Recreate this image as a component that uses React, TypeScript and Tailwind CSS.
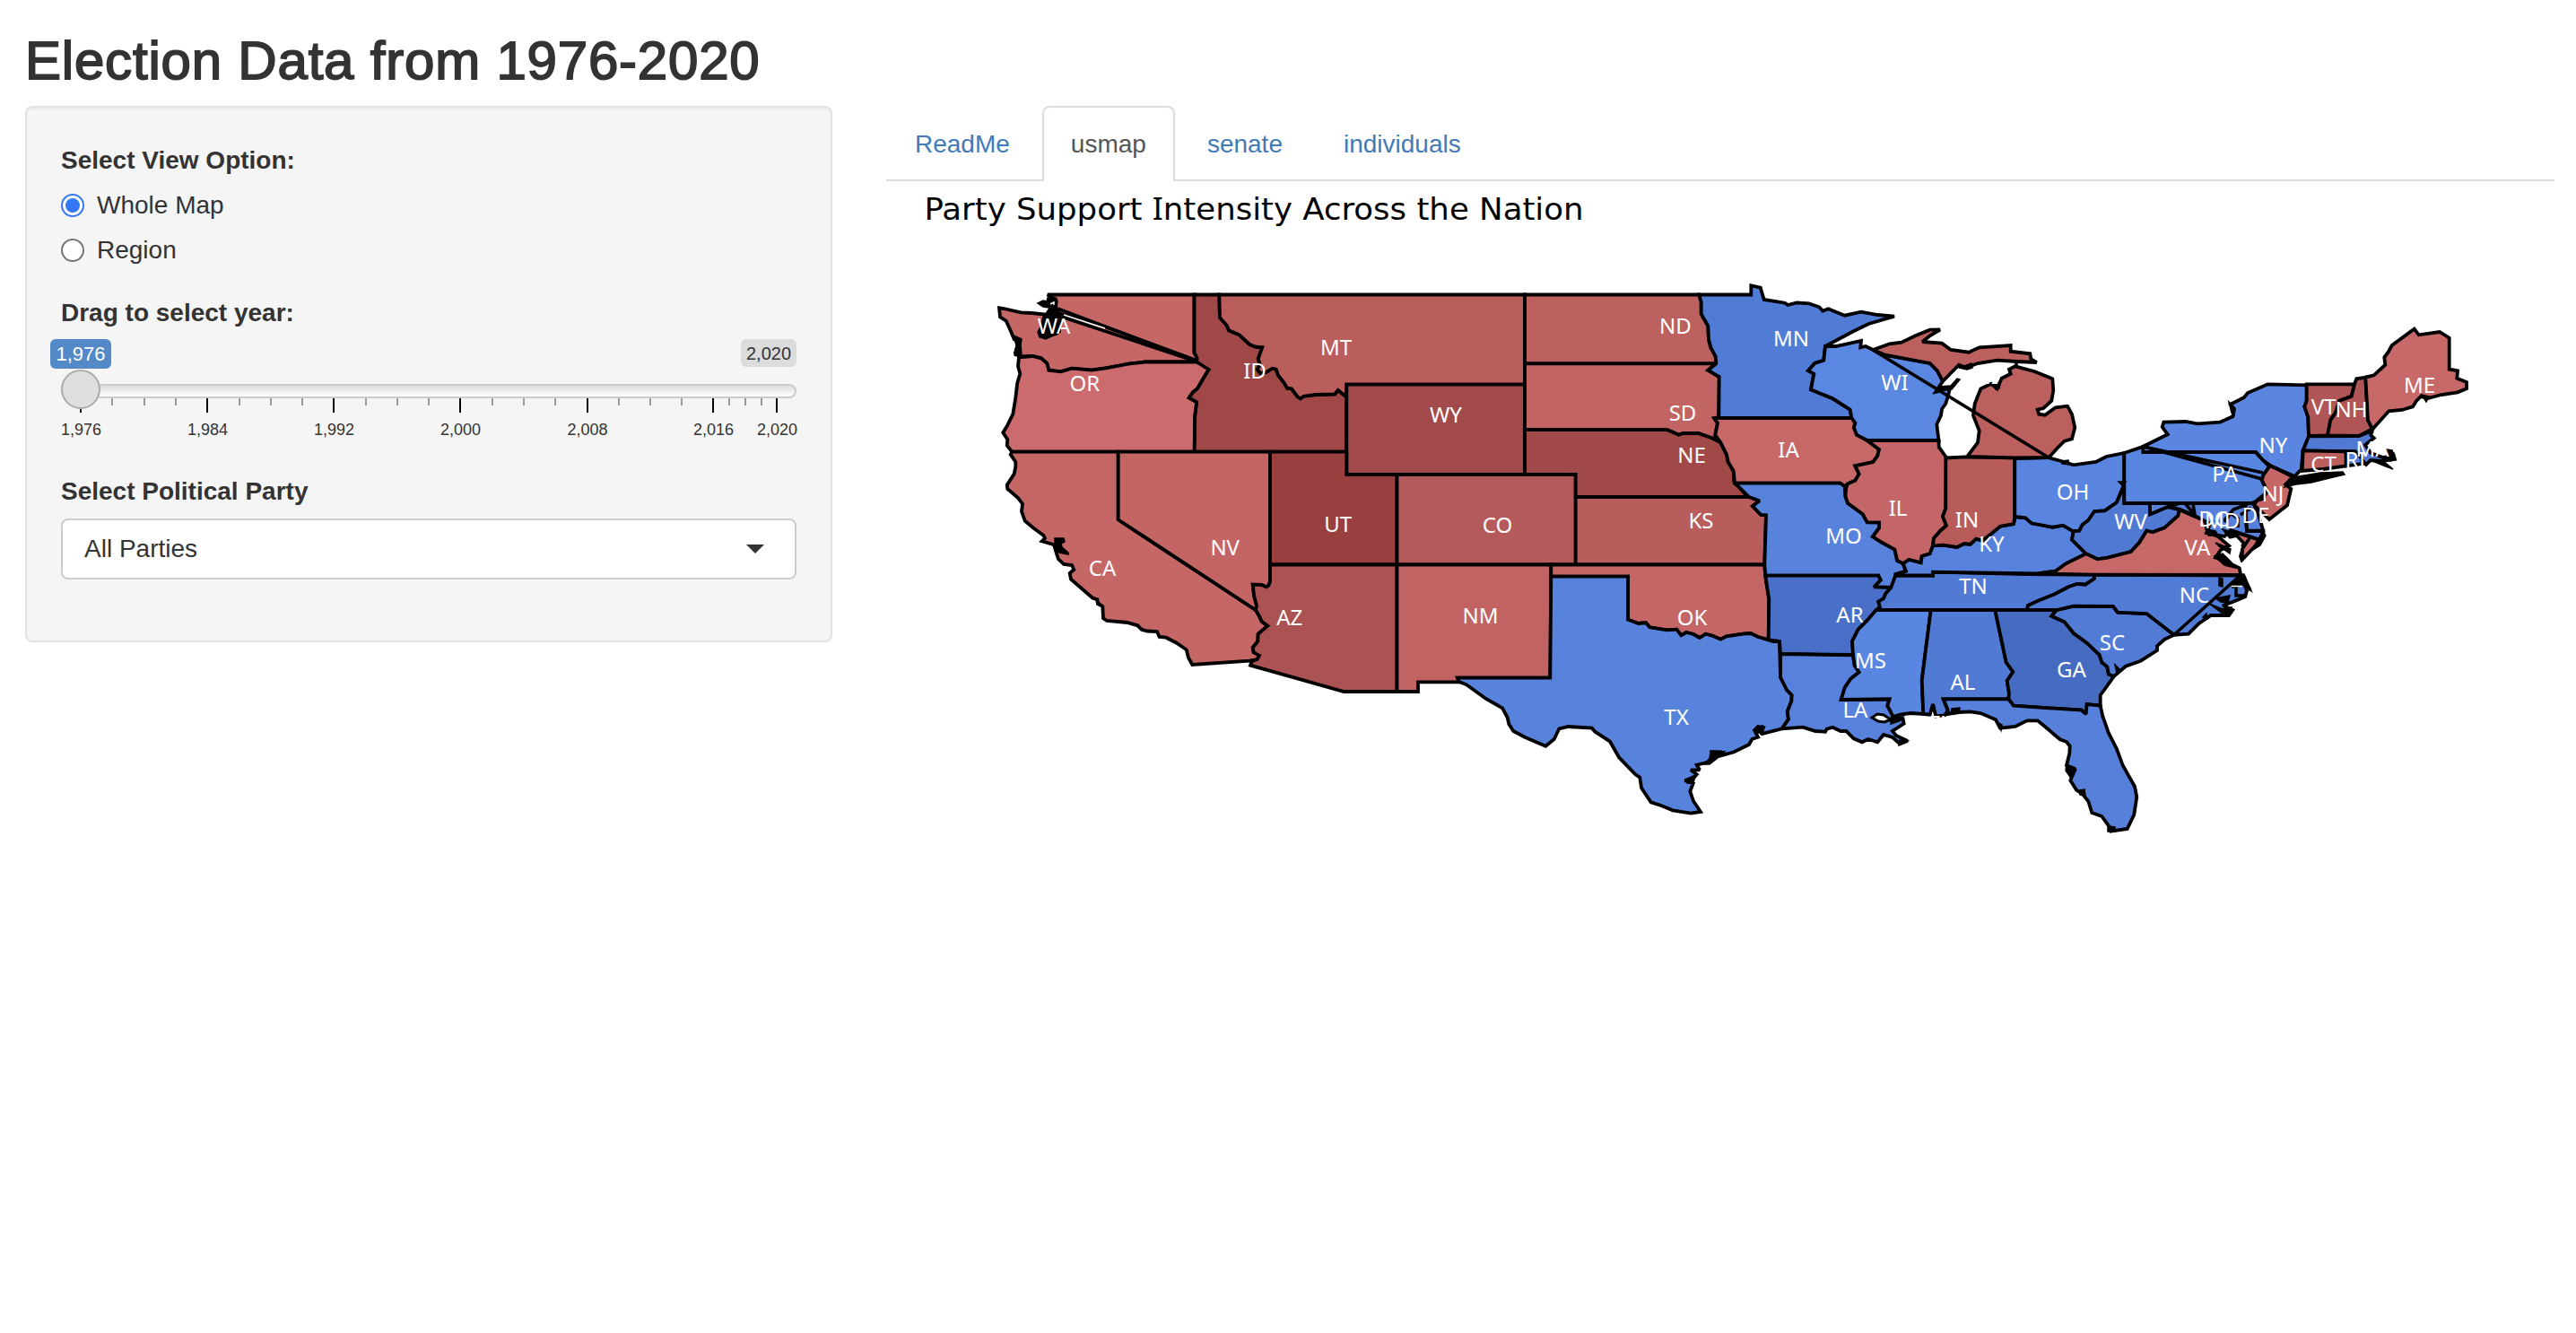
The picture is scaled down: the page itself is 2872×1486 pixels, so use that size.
import React from "react";

type Region = { id: string; fill: string; points: string };
type Label = [string, number, number];

const REGIONS: Region[] = [
  { id: "WA", fill: "#c56767", points: "1168,328.5 1331.5,328.5 1331.5,393 1334.5,399 1334.5,403.5 1313,403.5 1276.7,403.5 1258,405.7 1244,408.5 1233,410.3 1217,412.7 1195,410.7 1182.7,414.3 1169.3,412.7 1167.3,405 1160.7,399.3 1151,397 1139.3,397.3 1132,393 1136.7,379.3 1130.7,378.3 1127.3,370 1121.7,357.7 1115,353.3 1114,343.3 1119.3,344 1138.3,348.3 1150,349 1166.7,350.7 1171,344 1177,340 1177,334 1171,331" },
  { id: "OR", fill: "#cc6b6d", points: "1136,398.3 1151,397 1160.7,399.3 1167.3,405 1169.3,412.7 1182.7,414.3 1195,410.7 1217,412.7 1233,410.3 1258,405.7 1276.7,403.5 1334.5,403.5 1340,406.7 1347.7,412 1341.7,421.7 1335,433.3 1330,437.3 1325.7,443.3 1334.3,448.3 1332.3,463.3 1331.7,503.7 1128.3,503.7 1122.7,496.7 1123.3,490 1118.3,482.3 1122.7,475 1129.3,461.7 1132.3,443.3 1134.3,426.7 1137.3,416.7 1135,408" },
  { id: "ID", fill: "#a04848", points: "1331.5,328.5 1359.3,328.5 1360,354 1367.7,362.7 1370,368.3 1381.7,373.3 1393.3,384 1400,386.7 1407.3,387.3 1402.7,400 1405,406.7 1401.7,411.7 1405,416 1411.7,415 1418.3,410.7 1422.7,411.7 1425,418.3 1431.7,426.7 1435,432.7 1440,433.3 1446.7,442.3 1450,444.3 1453.3,441.7 1466.7,440 1488.3,439.3 1491.7,435 1501,442.3 1501.3,503.7 1331.7,503.7 1332.3,463.3 1334.3,448.3 1325.7,443.3 1330,437.3 1335,433.3 1341.7,421.7 1347.7,412 1334.5,403.5 1334.5,399 1331.5,393" },
  { id: "MT", fill: "#b95d5d", points: "1359.3,328.5 1700,328.5 1700,428.7 1501.3,428.7 1501,442.3 1491.7,435 1488.3,439.3 1466.7,440 1453.3,441.7 1450,444.3 1446.7,442.3 1440,433.3 1435,432.7 1431.7,426.7 1425,418.3 1422.7,411.7 1418.3,410.7 1411.7,415 1405,416 1401.7,411.7 1405,406.7 1402.7,400 1407.3,387.3 1400,386.7 1393.3,384 1381.7,373.3 1370,368.3 1367.7,362.7 1360,354" },
  { id: "WY", fill: "#a24a4a", points: "1501.3,428.7 1700,428.7 1700,529 1501.3,529" },
  { id: "CA", fill: "#c56767", points: "1128.3,503.7 1246.7,503.7 1246.7,579.3 1400,680 1403.3,685.7 1406.7,692.7 1413.3,697.7 1402.7,706.7 1402.3,715 1396.7,721.7 1397.7,727.3 1404,730.7 1401.7,735 1393.3,736.7 1329.3,741 1325,733.3 1322.7,724.3 1311.7,716.7 1300,710.7 1292.7,710 1290,704 1279,703.5 1272.7,701.7 1268.3,697.3 1256.7,694 1234,692 1230,689.3 1229.3,676 1224,672.7 1223.3,668.3 1218.3,666.7 1194,645.7 1192.7,639 1197.3,635 1195,630 1186,629 1180,623.3 1177.3,615 1175,607.3 1161.7,603.3 1165,600 1163.3,596.7 1151.7,588.3 1142.7,580.7 1139,570 1140,561.7 1135,555 1123.3,545 1122.7,540.7 1130.7,528.3 1132.3,520 1132.3,515 1126.7,506.7" },
  { id: "NV", fill: "#c46565", points: "1246.7,503.7 1416,503.7 1416,648.3 1414.5,652.5 1411.7,654.3 1406.7,652 1396.7,651.7 1398.3,665 1401,675 1400,680 1246.7,579.3" },
  { id: "UT", fill: "#993f3f", points: "1416,503.7 1501.3,503.7 1501.3,529 1557.5,529 1557.5,629.5 1416,629.5" },
  { id: "AZ", fill: "#ab5252", points: "1416,629.5 1557.5,629.5 1557.5,771 1498.3,771 1394,741.7 1395.7,737.3 1401.7,735 1404,730.7 1397.7,727.3 1396.7,721.7 1402.3,715 1402.7,706.7 1413.3,697.7 1406.7,692.7 1403.3,685.7 1400,680 1401,675 1398.3,665 1396.7,651.7 1406.7,652 1411.7,654.3 1414.5,652.5 1416,648.3" },
  { id: "CO", fill: "#b55a5a", points: "1557.5,529 1756.7,529 1756.7,629.5 1557.5,629.5" },
  { id: "NM", fill: "#c26363", points: "1557.5,629.5 1729.3,629.5 1728.3,755.7 1625,755.7 1626.7,760.3 1581,760.3 1581,771 1557.5,771" },
  { id: "ND", fill: "#bc6060", points: "1700,328.5 1894.3,328.5 1896.7,336.7 1896.7,350 1904.3,363.3 1905,378.3 1907.3,387.3 1912.7,397.3 1913.3,405.3 1700,405.3" },
  { id: "SD", fill: "#c26364", points: "1700,405.3 1913.3,405.3 1904.3,412.7 1916.7,420 1916.3,465 1911,466 1915,471.7 1912.3,485 1913.3,491.7 1908.3,488.3 1893.3,483 1876.7,483 1871.7,484.7 1858.3,479 1700,479" },
  { id: "NE", fill: "#a14949", points: "1700,479 1858.3,479 1871.7,484.7 1876.7,483 1893.3,483 1908.3,488.3 1918.3,493.3 1925,506.7 1926.7,515 1932.7,525 1933.3,536.7 1939.3,543.3 1948.3,554 1756.7,554 1756.7,529 1700,529" },
  { id: "KS", fill: "#b85c5c", points: "1756.7,554 1950,554 1961.7,558.3 1954,564.3 1963.3,574 1969,574.3 1967.3,629.5 1756.7,629.5" },
  { id: "OK", fill: "#c46666", points: "1729.3,629.5 1967.3,629.5 1968.3,643.3 1972.3,668.3 1971.7,713.3 1960,710 1951.7,706 1943.3,706.7 1925,709.3 1918.3,712.7 1910,709 1901.7,706.7 1895,711 1888,707 1880,705 1874.3,708.3 1869.3,701.7 1858.3,702.3 1839.3,699.3 1835,694.3 1826.7,695 1815,690.7 1815,642.7 1729.3,642.7" },
  { id: "TX", fill: "#5883dc", points: "1729.3,642.7 1815,642.7 1815,690.7 1826.7,695 1835,694.3 1839.3,699.3 1858.3,702.3 1869.3,701.7 1874.3,708.3 1880,705 1888,707 1895,711 1901.7,706.7 1910,709 1918.3,712.7 1925,709.3 1943.3,706.7 1951.7,706 1960,710 1971.7,713.3 1976.7,715 1984,715 1985,755 1990,763.3 1992,769 1997.7,775 1997.3,781.7 1992.7,793.3 1994,801.7 1986.7,812.3 1963.3,818.3 1966,811 1960,810 1956,814 1960,821.7 1953.3,824 1950,830 1933.3,838.3 1915,843.3 1920,838.3 1908.3,838.3 1910,844 1903,850 1891.7,852.7 1895,858.3 1885,858.3 1891.7,863.3 1887,869 1878.3,870 1887.7,873.3 1884.3,882 1888,893 1896,905 1885,906.7 1865,903.3 1852,898 1840.7,894.3 1830,878.3 1828.3,866.7 1823.3,863.3 1805,844.3 1795,826.7 1778.3,815.7 1775,811.7 1748.3,810 1738.3,812.3 1732.7,824 1723.3,831.7 1700,821.7 1687.3,815 1682.3,807.3 1680.7,800 1675,789.3 1656.7,779 1635,763.3 1627,760 1625,755.7 1728.3,755.7" },
  { id: "MN", fill: "#517cd6", points: "1894.3,328.5 1952.3,328.5 1952.3,318.3 1962.7,320.7 1966.7,334 1990,337.7 1993.3,340 2003.3,337.3 2016.7,338.3 2028.3,342.3 2032.3,346.7 2038.3,344.3 2056.7,351.7 2075,347.7 2093.3,351 2112,352.7 2083.3,361 2065,370 2035,386 2033.3,401.7 2023.3,405 2016,413.3 2022.3,416.7 2019,434.3 2043.3,444.3 2062.7,456.7 2064.3,466 1916.3,466 1916.7,420 1904.3,412.7 1913.3,405.3 1912.7,397.3 1907.3,387.3 1905,378.3 1904.3,363.3 1896.7,350 1896.7,336.7" },
  { id: "WI", fill: "#5a87e2", points: "2035,386 2046.7,386 2075,380 2074.3,387.3 2080,386 2088.3,390 2101.7,395.7 2151.7,405 2160,413.3 2166,425 2158,437 2174,432 2172.3,440 2169.3,450 2165,456 2164,463 2159.3,473.3 2161.5,491 2081.7,491 2070,485 2066.7,476.7 2068.3,471.7 2064.3,466 2062.7,456.7 2043.3,444.3 2019,434.3 2022.3,416.7 2016,413.3 2023.3,405 2033.3,401.7" },
  { id: "IA", fill: "#c66768", points: "1911,466 2064.3,466 2068.3,471.7 2066.7,476.7 2070,485 2081.7,491 2095,501 2093.3,508.3 2088.3,515 2068.3,519.3 2072.7,528.3 2068.3,535.7 2060,539.3 2056.7,542.3 2051.7,538.7 1934,538.7 1932.7,525 1926.7,515 1925,506.7 1918.3,493.3 1912.3,485 1915,471.7" },
  { id: "IL", fill: "#c46567", points: "2081.7,491 2161.5,491 2161.7,498.3 2170,510 2169.3,566.7 2166,575.7 2170,586 2163.3,591.7 2156,600 2155,608.3 2151.7,617.3 2142.7,620 2141.7,627.3 2128.3,624 2121.7,628.3 2115,625 2112.3,612.7 2098.3,605 2087.7,598.3 2095,588.3 2095,582.7 2081.7,582.3 2076.7,573.3 2060,561 2057.3,553.3 2058.3,544 2060,539.3 2068.3,535.7 2072.7,528.3 2068.3,519.3 2088.3,515 2093.3,508.3 2095,501" },
  { id: "MO", fill: "#5883dc", points: "1934,538.7 2051.7,538.7 2056.7,542.3 2057.3,553.3 2060,561 2076.7,573.3 2081.7,582.3 2095,582.7 2095,588.3 2087.7,598.3 2098.3,605 2112.3,612.7 2115,625 2121.7,628.3 2125,636.7 2113.3,640 2111.7,648.3 2108.3,655 2089.3,654.3 2096.7,646.7 2094.3,641.7 1968.3,641.7 1967.3,629.5 1969,574.3 1963.3,574 1954,564.3 1961.7,558.3 1950,554 1939.3,543.3" },
  { id: "AR", fill: "#4a6fc8", points: "1968.3,641.7 2094.3,641.7 2096.7,646.7 2089.3,654.3 2108.3,655 2102.3,661.7 2100,667.3 2094.3,670.7 2096.7,676 2091.7,680 2081.7,691.7 2071.7,701.7 2065,715 2066.7,730 1985,729 1984,715 1971.7,713.3 1972.3,668.3" },
  { id: "LA", fill: "#5781dc", points: "1985,729 2066,730.3 2067.7,741.7 2072.7,749.3 2063.3,756.7 2056.7,766.7 2052.7,780 2106.7,779.3 2104.3,786.7 2110.7,796.7 2109,803 2121.7,801.7 2122.7,806.7 2110,815 2114,820 2126.7,826 2118.3,829.3 2110,822 2100,819 2093.3,827.3 2082.7,824 2076,827.3 2066.7,823.3 2058.3,815 2052,815 2043.3,810.7 2036.7,812.7 2035,815.7 2024,815 2010,810.7 1986.7,812.3 1994,801.7 1992.7,793.3 1997.3,781.7 1997.7,775 1992,769 1985,755" },
  { id: "MS", fill: "#5986e0", points: "2091.7,680 2152.7,680 2142.7,758.3 2144.3,796 2130,795 2118.3,796.7 2110.7,799 2104.3,786.7 2106.7,779.3 2052.7,780 2056.7,766.7 2063.3,756.7 2072.7,749.3 2067.7,741.7 2066,730.3 2065,715 2071.7,701.7 2081.7,691.7" },
  { id: "AL", fill: "#507ad4", points: "2152.7,680 2224.3,680 2236.7,738.3 2244.3,749 2237.7,759 2240,773.3 2239.3,779.3 2166.7,779.3 2171.7,791.7 2168.3,797.3 2158.3,798.5 2155,785 2151.7,796.7 2144.3,796 2142.7,758.3" },
  { id: "TN", fill: "#507ad4", points: "2113.3,641.5 2155,641.5 2155,637.7 2261.7,640 2335,640.7 2335,645 2325,651.7 2316,651 2306.7,654 2290,662.7 2271.7,670 2261,675 2260,680 2096.7,680 2094.3,670.7 2100,667.3 2102.3,661.7 2108.3,655" },
  { id: "GA", fill: "#456cc0", points: "2224.3,680 2293,680 2287.3,686.7 2301.7,693.3 2312,706 2326.7,716.7 2340.7,730 2343.3,738.3 2349.3,743.3 2351,751.7 2356.7,754 2348.3,766 2341.7,775 2341.7,786.7 2326.7,785 2325.7,796 2320.7,791.7 2245,786.7 2239.3,779.3 2240,773.3 2237.7,759 2244.3,749 2236.7,738.3" },
  { id: "FL", fill: "#5680da", points: "2166.7,779.3 2239.3,779.3 2245,786.7 2320.7,791.7 2325.7,796 2326.7,785 2341.7,786.7 2344.3,798.3 2350.7,816.7 2360,835 2366.7,853.3 2380,876.7 2382.3,888.3 2379.3,908.3 2371.7,924 2353.3,926.7 2351.7,921.7 2343.3,910 2332.3,906 2328.3,893.3 2321.7,885 2315,880.7 2308.3,870 2313.3,858.3 2304,853.3 2307.3,840 2307.7,831.7 2304,827 2296.7,824.3 2280,810 2271.7,803.3 2260,803.3 2246.7,810 2230,811.7 2225,802.3 2208.3,795 2196.7,793.3 2184,794 2171.7,796 2171.7,791.7" },
  { id: "SC", fill: "#517bd5", points: "2293,680 2311.7,675.7 2356,676 2361,682.7 2393.3,684 2424,707.7 2413.3,712.7 2405,720 2405,725 2386.7,736.7 2370,742.7 2356.7,754 2351,751.7 2349.3,743.3 2343.3,738.3 2340.7,730 2326.7,716.7 2312,706 2301.7,693.3 2287.3,686.7" },
  { id: "NC", fill: "#517cd6", points: "2335,640.7 2498,641.7 2502,650 2505,658.3 2503.3,665 2490,670.7 2478.3,675 2489.3,680 2485,686 2465,686 2451.7,695 2440,706.7 2424,707.7 2393.3,684 2361,682.7 2356,676 2311.7,675.7 2293,680 2260,680 2261,675 2271.7,670 2290,662.7 2306.7,654 2316,651 2325,651.7 2335,645" },
  { id: "KY", fill: "#5681dc", points: "2155,608.3 2166.7,607.7 2181.7,610 2190,606 2196.7,606.7 2203.3,600.7 2210,602.7 2220,595 2230,586.7 2245,584 2246.7,576 2258.3,577.3 2265,583.3 2288.3,587.7 2300,585.7 2311.7,592.3 2310,601.7 2325.7,617.3 2303.3,628.3 2291.7,636.7 2271.7,639.5 2155,637.7 2155,641.5 2113.3,641.5 2125,636.7 2121.7,628.3 2128.3,624 2141.7,627.3 2142.7,620 2151.7,617.3" },
  { id: "IN", fill: "#b75b5b", points: "2169.3,510.5 2191.7,509.3 2246.3,510 2246.3,576.7 2245,584 2230,586.7 2220,595 2210,602.7 2203.3,600.7 2196.7,606.7 2190,606 2181.7,610 2166.7,607.7 2155,608.3 2156,600 2163.3,591.7 2170,586 2166,575.7 2169.3,566.7" },
  { id: "OH", fill: "#5985e0", points: "2246.3,511 2283.3,510 2298,514 2311.7,518.3 2336.7,515 2348.3,509 2368.3,505 2368.3,540 2360,560 2346.7,569.3 2335,570 2328.3,580 2321.7,585 2318.3,591.7 2311.7,592.3 2300,585.7 2288.3,587.7 2265,583.3 2258.3,577.3 2246.3,576" },
  { id: "MI-lower", fill: "#bc5f5f", points: "2246.7,408.3 2268,414 2288.3,422.3 2289.3,435 2287.3,446.7 2278.3,455 2271.7,456.7 2273.3,461.7 2280,462.7 2291.7,454.3 2305,452.7 2310,461.7 2313.3,476.7 2310,489.3 2301.7,491.7 2293.3,500 2284.3,510 2246.7,510.5 2193.3,509 2205,493.3 2206.7,480 2200,463.3 2201.7,450 2208.3,433.3 2220,427.7 2226.7,433.3 2231.7,421.7 2241.7,416.7 2240,411.7" },
  { id: "MI-upper", fill: "#bc5f5f", points: "2088.3,390 2106.7,383.3 2120,381.7 2136,374 2151.7,367.7 2163,367.5 2152,374 2143.3,381 2165,382.7 2175,390 2195,392.7 2206.7,387.3 2241.7,385 2241.7,391.7 2263.3,394.3 2264.3,400 2270.7,404 2248.3,403 2226.7,401.7 2205,405 2191.7,410 2184,406.7 2166,425 2160,413.3 2151.7,405 2101.7,395.7" },
  { id: "WV", fill: "#4f79d3", points: "2368.3,540 2368.3,561 2396.7,561 2397.3,573.3 2416.7,565 2430,568.3 2428.3,575 2413.3,588.3 2400,593.3 2393.3,591.7 2385,605 2375.7,615 2350,621.7 2338.3,623.3 2325.7,617.3 2310,601.7 2311.7,592.3 2318.3,591.7 2321.7,585 2328.3,580 2335,570 2346.7,569.3 2360,560" },
  { id: "VA", fill: "#c66868", points: "2430,568.3 2445,575 2458,580 2461.7,593.3 2473.3,598.3 2485,608.3 2476,613 2470,621.7 2483.3,626.7 2496.7,633.3 2498.3,641 2335,640.7 2271.7,639.5 2291.7,636.7 2303.3,628.3 2325.7,617.3 2338.3,623.3 2350,621.7 2375.7,615 2385,605 2393.3,591.7 2400,593.3 2413.3,588.3 2428.3,575" },
  { id: "VA-shore", fill: "#c66868", points: "2487,590 2520,602 2514,609 2498,626 2496,614 2502,606" },
  { id: "MD", fill: "#5680da", points: "2396.7,561 2503.3,561 2505,592 2523,592 2520,602 2487,591 2480,598 2460,594 2464,584 2445,574 2430,567.5 2416.7,565 2397.3,573.3" },
  { id: "DE", fill: "#5680da", points: "2503.3,561 2512,560 2518,574 2523.3,591.7 2505,591.7" },
  { id: "PA", fill: "#5885e0", points: "2368.3,505 2390,497.7 2390,504 2515,504 2523.3,513.3 2530,520 2523.3,530 2521.7,535 2528.3,548.3 2525,555 2510,561 2368.3,561" },
  { id: "NJ", fill: "#c56767", points: "2531,519 2556.7,531.7 2548.3,540 2554.3,545 2550,563.3 2530,579 2513.3,563 2516,558 2528.3,548.3 2521.7,535 2523.3,530" },
  { id: "NY", fill: "#5a86e1", points: "2389.3,497.7 2416.7,484.3 2410.7,476 2412.3,470.7 2436.7,470 2450,472.3 2475,470.7 2489.3,464.3 2490.7,456.7 2486.7,450.7 2501.7,443.3 2506,438 2528.3,428.3 2571.7,429.3 2571.7,446.7 2569.3,453.3 2573.3,465 2574,486.7 2567.7,501.7 2565.7,523.3 2558.3,531 2531.7,519.3 2523,513 2515,504 2389.3,504" },
  { id: "VT", fill: "#b05656", points: "2571.7,428.3 2625,428.3 2621.7,441.7 2608.3,446.7 2604,460 2598.3,468.3 2595,485.5 2574,486 2573.3,465 2569.3,453.3 2571.7,446.7" },
  { id: "NH", fill: "#b05656", points: "2625,428.3 2627.3,422.3 2637.3,420.7 2640,468.3 2645,478.3 2630,486 2595,485.5 2598.3,468.3 2604,460 2608.3,446.7 2621.7,441.7" },
  { id: "ME", fill: "#c76969", points: "2637.3,420.7 2646.7,418.3 2659.3,406.7 2658.3,398.3 2663,392 2666.7,385 2691.7,366.7 2696.7,373.3 2720,370 2730.7,376.7 2730.7,411.7 2740,413.3 2739.3,421.7 2750,426 2750,433.3 2740,437.3 2722,440 2706.7,444 2699,442 2694,447 2690,453.3 2678,457 2663.3,458.3 2646.7,476.7 2645,478.3 2640,468.3" },
  { id: "MA", fill: "#5079d4", points: "2574,486.3 2630,486 2645,480 2643.3,485 2646.7,488.3 2637,496 2643.3,505 2656.7,510 2666,509 2662,502 2668.3,506 2670,512 2654,514 2643,513 2638,518 2633,512 2626,503.3 2567.7,502.3" },
  { id: "CT", fill: "#bb5e5e", points: "2567.7,502.3 2615.7,503.3 2615.7,519.3 2590,523 2566.7,525" },
  { id: "RI", fill: "#5681dc", points: "2615.7,503.3 2626,503.3 2633,511 2634,517 2615.7,519.3" },
];

/* Islands, inlets and the closing segments that join separate land parts. */
const SHORE_BLOBS: string[] = [
  "1157,338 1163,335 1167,336 1168,332 1177,332 1179,336 1178,343 1181,347 1183,356 1182,370 1178,373 1172,375 1166,378 1159,376 1157,370 1160,365 1163,353 1168,350 1170,343 1163,342",
  "1130,374 1139,378 1138,384 1139,395 1137,398 1131,396 1133,385",
  "1176,600 1186,600 1187,604 1183,606 1184,610 1191,616 1191,618 1181,616 1176,611",
  "1222,668 1226,672 1230,677 1223,674",
  "1908,837 1923,838 1915,845 1906,852 1895,852 1905,848",
  "1879,869 1890,864 1888,873 1881,873",
  "1957,812 1965,809 1964,817 1959,817",
  "2304,852 2314,856 2313,861 2308,866 2303,859",
  "2318,881 2324,880 2325,887 2319,886",
  "2350,921 2358,922 2358,927 2350,927",
  "2155,439 2163,431 2175,430 2182,422 2185,423 2176,434 2163,436",
  "2184,406 2190,408 2198,405 2199,410 2193,412 2184,410",
  "2223,428 2230,427 2229,433 2225,434",
  "2298,514 2306,513 2307,518 2299,517",
  "2362,537 2370,537 2367,542",
  "2557,532 2587,527 2612,526 2614,529 2597,533 2577,538 2560,540 2547,543 2552,534",
  "2643,513 2656,513 2668,523 2655,518",
  "2660,501 2667,502 2670,512 2665,514 2662,507",
  "2470,605 2487,612 2486,617 2474,609",
  "2469,620 2478,617 2488,627 2492,633 2480,630",
  "2496,640 2502,640 2510,659 2501,652",
  "2488,650 2496,645 2503,652 2489,655",
  "2474,644 2478,645 2478,654 2474,653",
  "2463,673 2478,679 2488,677 2488,683 2478,684",
  "2470,667 2486,664 2484,672 2476,671",
  "2456,688 2460,684 2461,690",
  "2110,799 2122,799 2117,804 2108,807",
  "2118,825 2127,826 2117,831",
  "2517,602 2523,592 2526,597 2520,608 2510,614",
  "2516,559 2528,549 2524,557",
  "2459,590 2470,592 2473,597 2462,597",
  "2478,590 2490,594 2494,598 2486,600",
  "2176,790 2185,789 2184,795 2175,796",
  "2228,806 2232,808 2231,814",
  "2358,741 2363,746 2360,750",
  "2700,440 2708,442 2705,448",
  "2485,448 2492,455 2491,463 2488,460",
];

const CONNECTORS: string[] = [
  "M1179 344L1334 402",
  "M1183 353L1334 403",
  "M1180 349L1234 365L1334 402",
  "M2088 390L2284 510",
  "M2248 403L2248 409",
  "M2390 498L2523 527",
  "M2390 498L2522 534",
  "M2424 707.5L2497 642",
  "M2487 592L2520 602M2495 588L2495 578L2487 572L2480 582",
  "M2503 561L2505 592L2523 592",
  "M2430 561L2416 566M2436 561L2447 574M2445 562L2447 574",
  "M2498 640L2509 658",
  "M2506 562L2490 568L2480 580M2510 566L2498 574",
  "M2508 600L2500 612L2500 622",
  "M2493 653L2493 664L2503 664",
];

const LABELS: Label[] = [
  ["WA", 1175, 371.5], ["OR", 1209.3, 435.5], ["ID", 1399, 421.5], ["MT", 1489.5, 396],
  ["CA", 1229, 641.5], ["NV", 1365.7, 618.5], ["UT", 1491.7, 592.5], ["AZ", 1437.7, 696.5],
  ["WY", 1612, 471], ["CO", 1669.5, 594], ["ND", 1868, 372], ["SD", 1876, 468.5],
  ["NE", 1886, 516], ["KS", 1896.5, 588.5], ["NM", 1650.5, 694.5], ["OK", 1886.5, 696.5],
  ["TX", 1869, 807.5], ["MN", 1997, 385.5], ["WI", 2112.5, 434.5], ["IA", 1994, 509.5],
  ["IL", 2116, 574.5], ["OH", 2311, 556.5], ["IN", 2193, 587.5], ["MO", 2055.5, 605.5],
  ["KY", 2220.5, 614.5], ["TN", 2200, 661.5], ["AR", 2062.5, 694], ["MS", 2085.5, 745],
  ["AL", 2188.5, 768.5], ["LA", 2068.5, 800], ["GA", 2309.5, 755], ["WV", 2375.5, 589.5],
  ["VA", 2450, 618.5], ["NC", 2446.5, 672], ["SC", 2355, 724.5], ["PA", 2480.5, 537],
  ["NY", 2534.5, 504.5], ["NJ", 2534, 558.5], ["DE", 2515, 582.5], ["DC", 2467.5, 587],
  ["MD", 2477.7, 588.5], ["ME", 2697.5, 437.5], ["VT", 2590.5, 461.5], ["NH", 2621.5, 465],
  ["CT", 2590.5, 525.5], ["RI", 2626, 520.5], ["MA", 2645, 509],
  ["MI", 2213, 428], ["FL", 2163, 815],
];

const TABS = ["ReadMe", "usmap", "senate", "individuals"];

const MAJOR: [number, string][] = [
  [90, "1,976"], [231, "1,984"], [372, "1,992"], [513, "2,000"], [654.5, "2,008"], [795, "2,016"], [866, "2,020"],
];
const MINOR = [
  125, 161, 196, 267, 302, 337, 408, 443, 478, 549, 584, 619, 690, 725, 760, 813, 831, 849,
];
const SLIDER_LEFT = 68;

function Slider() {
  return (
    <div className="relative mt-[9px] h-[150px] w-full">
      <div className="absolute top-[50px] left-0 h-4 w-full rounded-[8px] border-2 border-[#ccc] bg-gradient-to-b from-[#dddddd] to-white" />
      {MINOR.map((x) => (
        <span key={x} className="absolute top-[66px] h-2 w-[2px] bg-[#999]" style={{ left: x - SLIDER_LEFT - 1 }} />
      ))}
      {MAJOR.map(([x, text]) => (
        <React.Fragment key={text}>
          <span className="absolute top-[66px] h-4 w-[2px] bg-black" style={{ left: x - SLIDER_LEFT - 1 }} />
          <span
            className="absolute top-[91px] -translate-x-1/2 text-[18px] leading-[20px] text-[#333]"
            style={{ left: x - SLIDER_LEFT + 0.5 }}
          >
            {text}
          </span>
        </React.Fragment>
      ))}
      <span className="absolute top-0 -left-[12px] flex h-[33px] w-[68px] items-center justify-center rounded-[6px] bg-[#5489c7] text-[22px] text-white">
        1,976
      </span>
      <span className="absolute top-0 right-0 flex h-[31px] w-[62px] items-center justify-center rounded-[6px] bg-[#dcdcdc] text-[20px] text-[#333]">
        2,020
      </span>
      <span className="absolute top-[34px] left-0 size-11 rounded-full border-2 border-[#ababab] bg-[#dedede] shadow-[1px_1px_3px_rgba(255,255,255,0.3)]" />
    </div>
  );
}

function Radio({ label, checked }: { label: string; checked?: boolean }) {
  return (
    <label className="mt-[10px] flex h-10 items-center gap-[14px]">
      <span
        className={
          checked
            ? "flex size-[26px] items-center justify-center rounded-full border-2 border-[#3478f6] bg-white"
            : "size-[26px] rounded-full border-2 border-[#767676] bg-white"
        }
      >
        {checked && <span className="size-4 rounded-full bg-[#3478f6]" />}
      </span>
      <span>{label}</span>
    </label>
  );
}

function Sidebar() {
  return (
    <aside className="flex h-[598px] w-[900px] flex-col rounded-[8px] border-2 border-[#e3e3e3] bg-[#f5f5f5] px-[38px] pt-[39px] text-[28px] leading-10 shadow-[inset_0_2px_2px_rgba(0,0,0,0.05)]">
      <div className="font-bold">Select View Option:</div>
      <Radio label="Whole Map" checked />
      <Radio label="Region" />
      <div className="mt-[30px] font-bold">Drag to select year:</div>
      <Slider />
      <div className="font-bold">Select Political Party</div>
      <div className="mt-[10px] flex h-[68px] items-center justify-between rounded-[8px] border-2 border-[#ccc] bg-white pr-[34px] pl-6">
        <span>All Parties</span>
        <svg width="20" height="10" viewBox="0 0 20 10">
          <path d="M0 0H20L10 10Z" fill="#333" />
        </svg>
      </div>
    </aside>
  );
}

function UsMap() {
  return (
    <svg className="block h-[780px] w-[1860px]" viewBox="988 202 1860 780">
      <text x="1030.5" y="244.5" fontSize="34" textLength="735" lengthAdjust="spacingAndGlyphs" fill="#000" className="font-['DejaVu_Sans',sans-serif]">
        Party Support <tspan className="font-['Noto_Sans',sans-serif]">I</tspan>ntensity Across the Nation
      </text>
      <g stroke="#000" strokeWidth="3.8" strokeLinejoin="miter" strokeMiterlimit="2">
        {REGIONS.map((r) => (
          <polygon key={r.id} points={r.points} fill={r.fill} />
        ))}
        <polygon points="2087,800 2093,796 2100,797 2108,802 2101,805 2094,804" fill="#fff" strokeWidth="3" />
        <polygon points="2490,600 2497,603 2499,610 2496,620 2499,629 2493,624 2490,616" fill="#fff" stroke="none" />
      </g>
      <g fill="#000" stroke="#000" strokeWidth="1.5">
        {SHORE_BLOBS.map((p) => (
          <polygon key={p} points={p} />
        ))}
      </g>
      <g fill="none" stroke="#000" strokeWidth="3.6">
        {CONNECTORS.map((d) => (
          <path key={d} d={d} />
        ))}
      </g>
      <path d="M1171 339L1175 337L1175 340M1186 351L1232 366M2488 653.5H2500" fill="none" stroke="#fff" strokeWidth="1.4" />
      <g fill="#fff" fontSize="24" textAnchor="middle" className="font-['Noto_Sans',sans-serif]">
        {LABELS.map(([name, x, y]) => (
          <text key={name} x={x} y={y}>
            {name}
          </text>
        ))}
      </g>
    </svg>
  );
}

export default function App() {
  return (
    <div className="min-h-[1486px] w-[2872px] bg-white pt-[34px] pl-7 font-['Liberation_Sans',Arial,sans-serif] text-[#333]">
      <h2 className="h-[66px] pt-px text-[60px] leading-[66px] font-normal tracking-[0.8px] [-webkit-text-stroke:1.8px_#333]">
        Election Data from 1976-2020
      </h2>
      <div className="mt-[18px] flex gap-[60px]">
        <Sidebar />
        <main className="w-[1860px]">
          <nav className="flex h-[84px] gap-1 border-b-2 border-[#ddd] text-[28px]">
            {TABS.map((t) => (
              <a
                key={t}
                className={
                  t === "usmap"
                    ? "h-[84px] rounded-t-[8px] border-2 border-b-0 border-[#ddd] bg-white px-[30px] pt-[21px] leading-10 text-[#555]"
                    : "px-8 pt-[23px] leading-10 text-[#4279b7]"
                }
              >
                {t}
              </a>
            ))}
          </nav>
          <UsMap />
        </main>
      </div>
    </div>
  );
}
